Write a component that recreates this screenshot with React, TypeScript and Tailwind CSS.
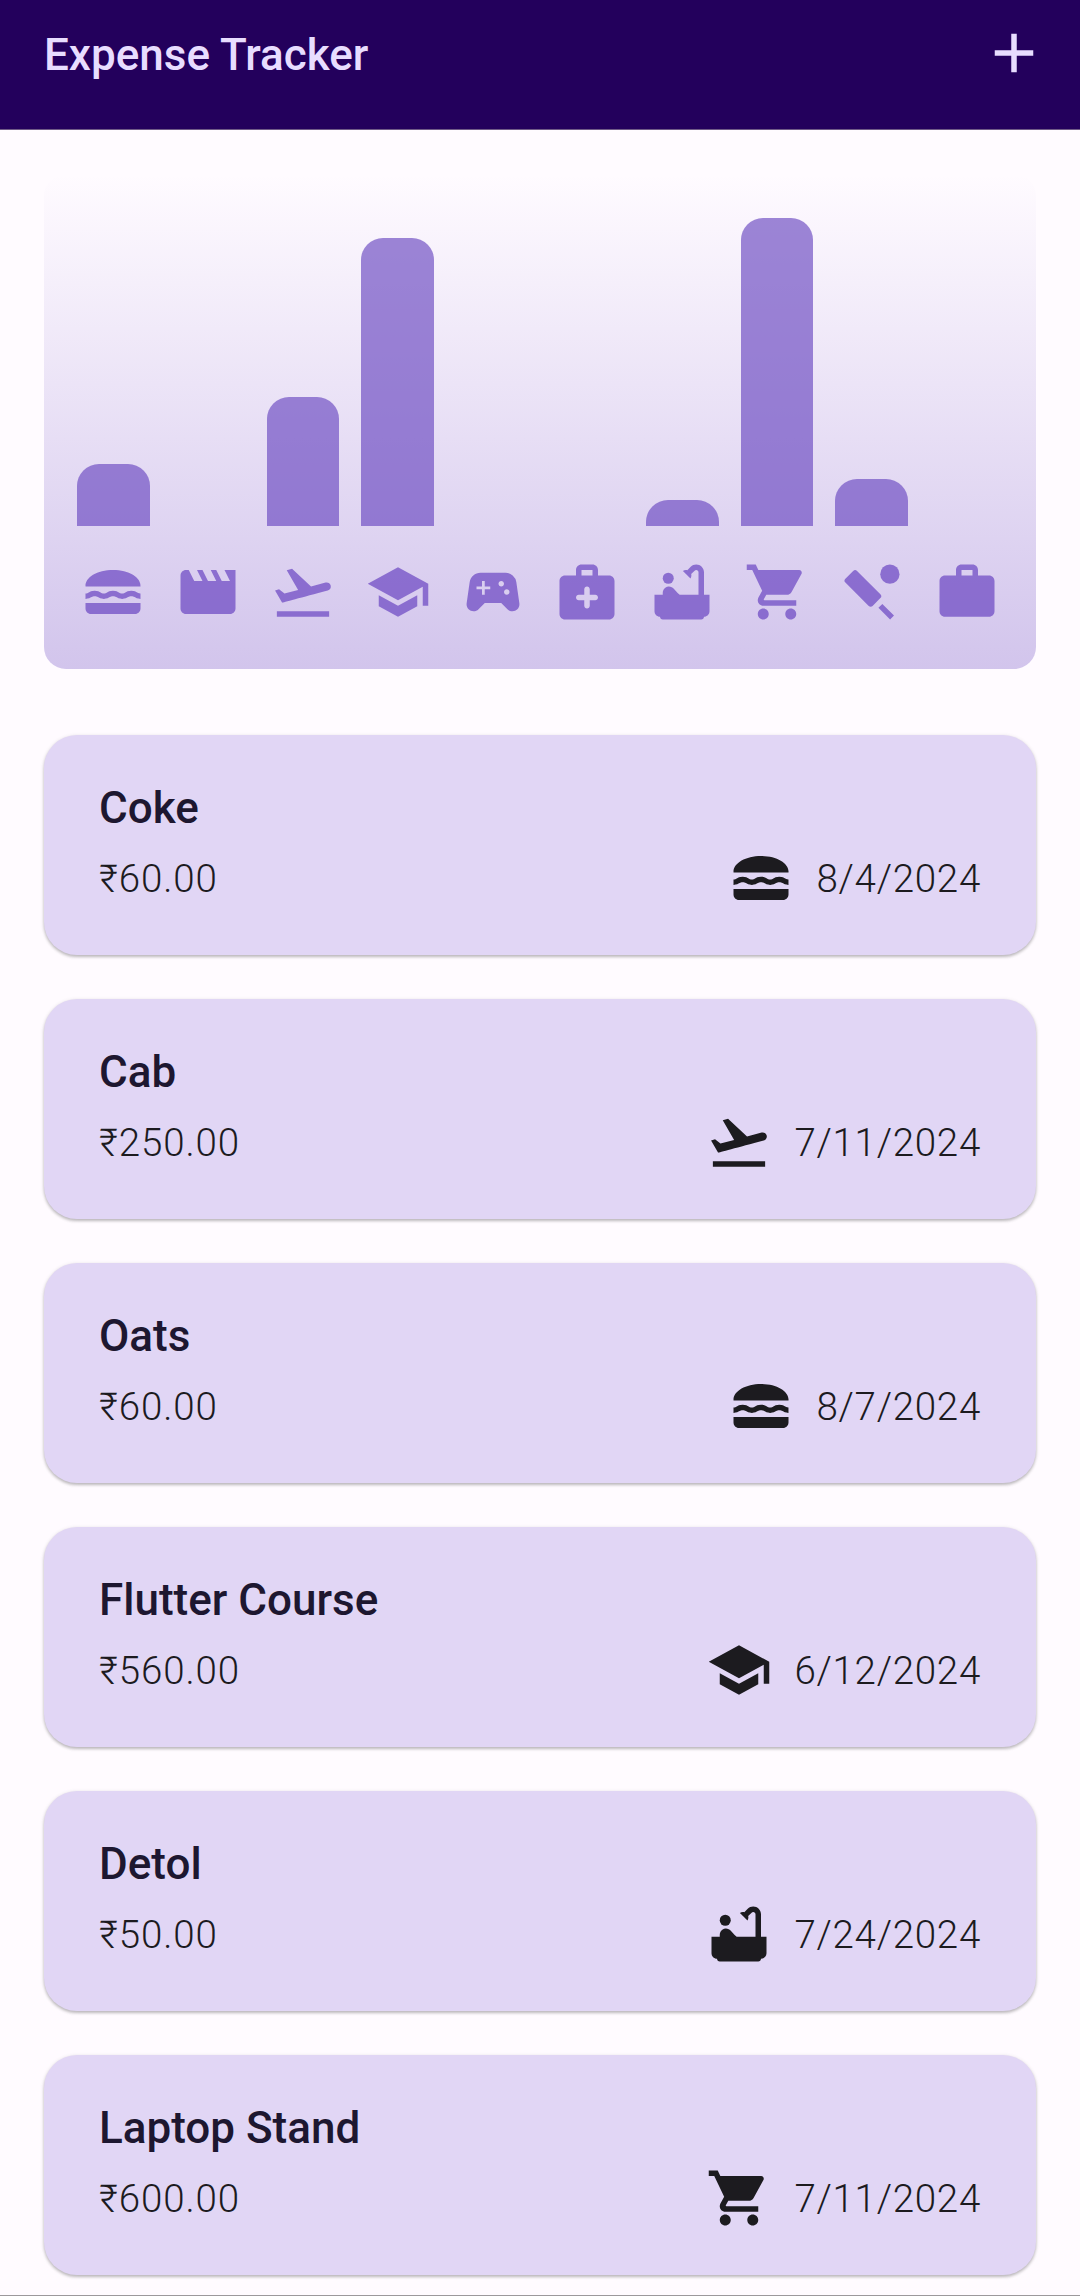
import type { ComponentType } from 'react';
import {
  MdAdd,
  MdBathtub,
  MdFlightTakeoff,
  MdLunchDining,
  MdMovieCreation,
  MdSchool,
  MdShoppingCart,
  MdSportsCricket,
  MdSportsEsports,
  MdWork,
} from 'react-icons/md';

type Icon = ComponentType<{ className?: string }>;
type Bucket = { name: string; icon: Icon; total: number };
type Expense = { title: string; amount: string; icon: Icon; date: string };

// First-aid case with a round-ended plus cut out of the body.
function MedicalCase({ className }: { className?: string }) {
  return (
    <svg viewBox="0 0 24 24" fill="currentColor" className={className}>
      <path
        fillRule="evenodd"
        d="M20 6h-4V4c0-1.1-.9-2-2-2h-4c-1.1 0-2 .9-2 2v2H4c-1.1 0-2 .9-2 2v12c0 1.1.9 2 2 2h16c1.1 0 2-.9 2-2V8c0-1.1-.9-2-2-2zM10 4h4v2h-4V4zm5 11h-2v2c0 .55-.45 1-1 1s-1-.45-1-1v-2H9c-.55 0-1-.45-1-1s.45-1 1-1h2v-2c0-.55.45-1 1-1s1 .45 1 1v2h2c.55 0 1 .45 1 1s-.45 1-1 1z"
      />
    </svg>
  );
}

const buckets: Bucket[] = [
  { name: 'food', icon: MdLunchDining, total: 120 },
  { name: 'movies', icon: MdMovieCreation, total: 0 },
  { name: 'travel', icon: MdFlightTakeoff, total: 250 },
  { name: 'education', icon: MdSchool, total: 560 },
  { name: 'games', icon: MdSportsEsports, total: 0 },
  { name: 'medical', icon: MedicalCase, total: 0 },
  { name: 'hygiene', icon: MdBathtub, total: 50 },
  { name: 'shopping', icon: MdShoppingCart, total: 600 },
  { name: 'sports', icon: MdSportsCricket, total: 90 },
  { name: 'work', icon: MdWork, total: 0 },
];

const expenses: Expense[] = [
  { title: 'Coke', amount: '₹60.00', icon: MdLunchDining, date: '8/4/2024' },
  { title: 'Cab', amount: '₹250.00', icon: MdFlightTakeoff, date: '7/11/2024' },
  { title: 'Oats', amount: '₹60.00', icon: MdLunchDining, date: '8/7/2024' },
  { title: 'Flutter Course', amount: '₹560.00', icon: MdSchool, date: '6/12/2024' },
  { title: 'Detol', amount: '₹50.00', icon: MdBathtub, date: '7/24/2024' },
  { title: 'Laptop Stand', amount: '₹600.00', icon: MdShoppingCart, date: '7/11/2024' },
];

const maxTotal = Math.max(...buckets.map((b) => b.total));

function Header() {
  return (
    <header className="flex h-[130px] shrink-0 items-start justify-between border-b border-[#6f5a87] bg-[#23005c] pl-[44px] pr-[33px]">
      <h1 className="mt-[27px] text-[44px] leading-[56px] font-medium text-[#e8ddff]">Expense Tracker</h1>
      <MdAdd className="mt-[19.5px] size-[66px] text-[#e8ddff]" />
    </header>
  );
}

function Chart() {
  return (
    <section className="mx-[44px] mt-[43.5px] flex h-[495px] shrink-0 flex-col rounded-[22px] bg-linear-to-t from-[#6946c0]/30 to-[#6946c0]/0 px-[22px] py-[44px]">
      <div className="flex flex-1 items-end">
        {buckets.map((b) => (
          <div key={b.name} className="flex h-full flex-1 items-end px-[11px]">
            <div
              className="w-full rounded-t-[22px] bg-[#6946c0]/65"
              style={{ height: `${(b.total / maxTotal) * 100}%` }}
            />
          </div>
        ))}
      </div>
      <div className="mt-[33px] flex">
        {buckets.map(({ name, icon: Icon }) => (
          <div key={name} className="flex flex-1 justify-center">
            <Icon className="size-[66px] text-[#6a44c2]/70" />
          </div>
        ))}
      </div>
    </section>
  );
}

function ExpenseCard({ title, amount, icon: Icon, date }: Expense) {
  return (
    <article className="flex h-[220px] shrink-0 flex-col rounded-[33px] bg-[#e1d6f5] px-[55px] pt-[44px] shadow-[0_2px_3px_rgba(0,0,0,0.2),0_1px_4px_rgba(0,0,0,0.12)]">
      <h2 className="h-[66px] pt-px text-[44px] leading-[56px] font-medium text-[#1d1730]">{title}</h2>
      <div className="flex h-[66px] items-center justify-between text-[38.5px] leading-[56px] font-light text-[#1c1b1f]">
        <span className="pt-[2px] tracking-[0.88px]">{amount}</span>
        <div className="flex items-center gap-[22.5px]">
          <Icon className="size-[66px]" />
          <span className="pt-[2px] tracking-[0.72px]">{date}</span>
        </div>
      </div>
    </article>
  );
}

export default function App() {
  return (
    <div className="flex h-[2296px] w-[1080px] flex-col overflow-hidden border-b border-[#9c999c] bg-[#fffbff] font-['Roboto',sans-serif]">
      <Header />
      <Chart />
      <main className="mx-[44px] mt-[66px] flex flex-col gap-[44px]">
        {expenses.map((e) => (
          <ExpenseCard key={e.title} {...e} />
        ))}
      </main>
    </div>
  );
}
